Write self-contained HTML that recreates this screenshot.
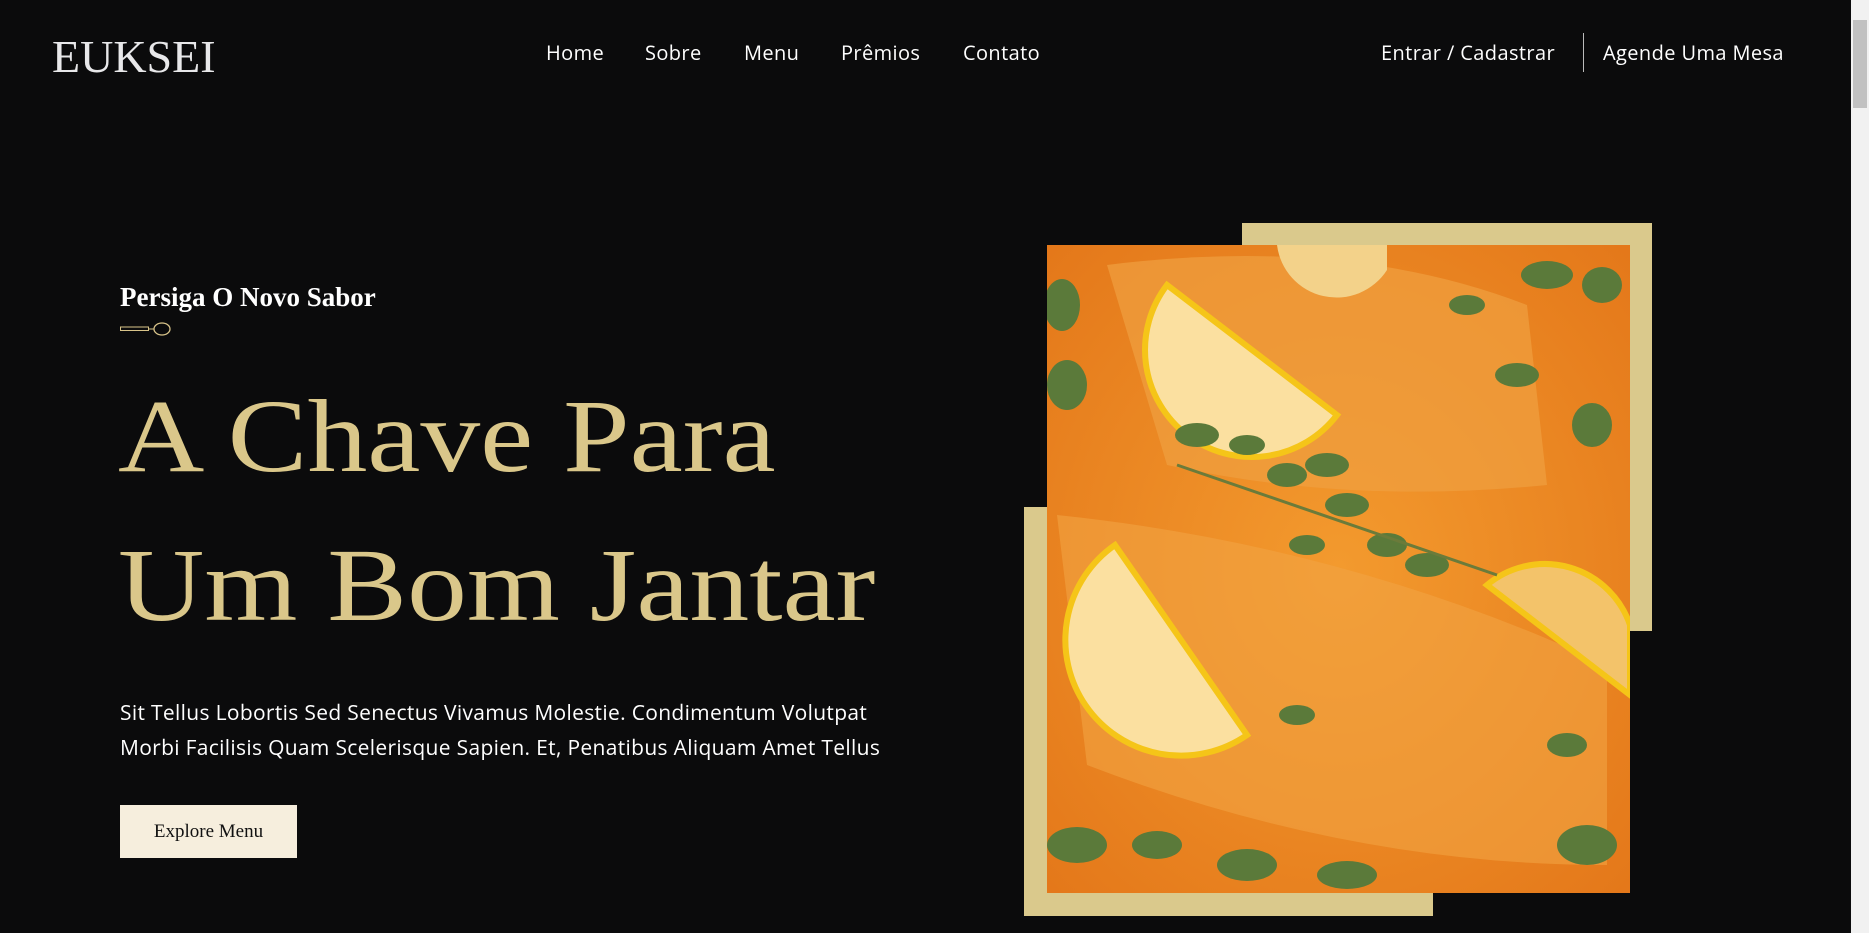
<!DOCTYPE html>
<html><head><meta charset="utf-8"><style>
*{margin:0;padding:0;box-sizing:border-box}
html,body{width:1869px;height:933px;overflow:hidden;background:#0b0b0c}
body{position:relative;font-family:"Open Sans","DejaVu Sans","Liberation Sans",sans-serif;color:#fff}
.abs{position:absolute;white-space:nowrap}
.logo{left:52px;top:34px;font-family:"Liberation Serif",serif;font-size:46px;color:#e8e8ea;line-height:1}
.nav{top:42px;font-size:20px;line-height:22px;letter-spacing:.4px;color:#fff}
.div{left:1583px;top:33px;width:1px;height:39px;background:#bbb}
.sub{left:120px;top:282px;font-family:"Liberation Serif",serif;font-weight:bold;font-size:27px;color:#fff}
.h1{left:118px;font-family:"Liberation Serif",serif;font-size:104px;color:#dac78a;line-height:1;transform-origin:left top;transform:scaleX(1.15)}
.p{left:120px;font-size:21px;letter-spacing:.32px;color:#fff}
.btn{left:120px;top:805px;width:177px;height:53px;background:#f6eedd;color:#111;font-family:"Liberation Serif",serif;font-size:19px;line-height:53px;text-align:center}
.g{position:absolute;background:#dac98c}
.sb{position:absolute;left:1851px;top:0;width:18px;height:933px;background:#f1f1f1}
</style></head><body>
<div class="abs logo">EUKSEI</div>
<div class="abs nav" style="left:546px">Home</div>
<div class="abs nav" style="left:645px">Sobre</div>
<div class="abs nav" style="left:744px">Menu</div>
<div class="abs nav" style="left:841px">Prêmios</div>
<div class="abs nav" style="left:963px">Contato</div>
<div class="abs nav" style="left:1381px">Entrar / Cadastrar</div>
<div class="abs div"></div>
<div class="abs nav" style="left:1603px">Agende Uma Mesa</div>

<div class="abs sub">Persiga O Novo Sabor</div>
<svg class="abs" style="left:120px;top:322px" width="58" height="14"><rect x="0.5" y="5" width="28" height="3.5" fill="none" stroke="#d9c48a" stroke-width="1"/><line x1="28" y1="7" x2="34" y2="7" stroke="#d9c48a"/><ellipse cx="42" cy="7" rx="8" ry="6" fill="none" stroke="#d9c48a" stroke-width="1.3"/></svg>

<div class="abs h1" style="top:385px">A Chave Para</div>
<div class="abs h1" style="top:534px">Um Bom Jantar</div>

<div class="abs p" style="top:699px">Sit Tellus Lobortis Sed Senectus Vivamus Molestie. Condimentum Volutpat</div>
<div class="abs p" style="top:734px">Morbi Facilisis Quam Scelerisque Sapien. Et, Penatibus Aliquam Amet Tellus</div>
<div class="abs btn">Explore Menu</div>

<div class="g" style="left:1242px;top:223px;width:410px;height:408px"></div>
<div class="g" style="left:1024px;top:507px;width:409px;height:409px"></div>
<svg style="position:absolute;left:1047px;top:245px" width="583" height="648" viewBox="0 0 583 648">
<defs><radialGradient id="o" cx="50%" cy="50%" r="70%"><stop offset="0" stop-color="#f39a2e"/><stop offset="1" stop-color="#e4781a"/></radialGradient></defs>
<rect width="583" height="648" fill="url(#o)"/>
<path d="M60 20 Q300 -10 480 60 L500 240 Q300 260 120 220 Z" fill="#f0a040" opacity=".7"/>
<path d="M10 270 Q300 300 560 420 L560 620 Q300 620 40 520 Z" fill="#f2a442" opacity=".6"/>
<path d="M120 40 A80 80 0 0 0 290 170 Z" fill="#fbe0a0" stroke="#f5c518" stroke-width="6"/>
<path d="M68 300 A95 95 0 0 0 200 490 Z" fill="#fbe0a0" stroke="#f5c518" stroke-width="6"/>
<path d="M440 340 A90 90 0 0 1 583 380 L583 450 Z" fill="#f3c36a" stroke="#f5c518" stroke-width="6"/>
<path d="M230 0 A60 60 0 0 0 340 25 L340 0 Z" fill="#f3d28a"/>
<g fill="#5b7a3a">
<ellipse cx="150" cy="190" rx="22" ry="12"/><ellipse cx="200" cy="200" rx="18" ry="10"/><ellipse cx="240" cy="230" rx="20" ry="12"/><ellipse cx="280" cy="220" rx="22" ry="12"/><ellipse cx="300" cy="260" rx="22" ry="12"/><ellipse cx="340" cy="300" rx="20" ry="12"/><ellipse cx="380" cy="320" rx="22" ry="12"/><ellipse cx="260" cy="300" rx="18" ry="10"/>
<ellipse cx="15" cy="60" rx="18" ry="26"/><ellipse cx="20" cy="140" rx="20" ry="25"/><ellipse cx="470" cy="130" rx="22" ry="12"/><ellipse cx="500" cy="30" rx="26" ry="14"/><ellipse cx="555" cy="40" rx="20" ry="18"/><ellipse cx="545" cy="180" rx="20" ry="22"/>
<ellipse cx="30" cy="600" rx="30" ry="18"/><ellipse cx="110" cy="600" rx="25" ry="14"/><ellipse cx="200" cy="620" rx="30" ry="16"/><ellipse cx="300" cy="630" rx="30" ry="14"/><ellipse cx="540" cy="600" rx="30" ry="20"/><ellipse cx="520" cy="500" rx="20" ry="12"/><ellipse cx="250" cy="470" rx="18" ry="10"/><ellipse cx="420" cy="60" rx="18" ry="10"/>
</g>
<path d="M130 220 L450 330" stroke="#6b7b3a" stroke-width="3"/>
</svg>
<div class="sb"><div style="position:absolute;left:2px;top:20px;width:14px;height:88px;background:#c1c1c1"></div></div>
</body></html>
